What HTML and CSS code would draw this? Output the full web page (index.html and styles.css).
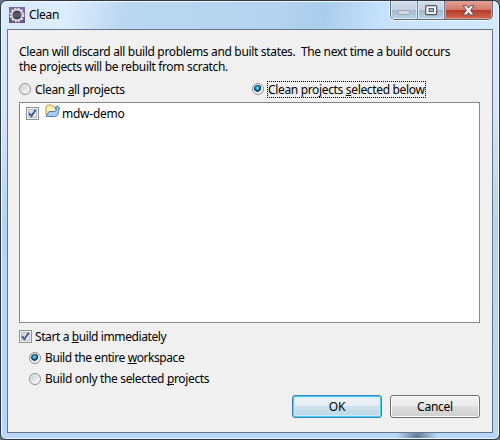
FILE: index.html
```html
<!DOCTYPE html>
<html lang="en">
<head>
<meta charset="utf-8">
<title>Clean</title>
<link rel="stylesheet" href="styles.css">
</head>
<body>
<div class="window">
  <header class="titlebar">
    <svg class="app-icon" width="16" height="16" viewBox="0 0 16 16">
      <rect width="16" height="16" fill="#65518b"/>
      <path d="M0 0h16v5L0 10z" fill="#7c6a9c"/>
      <circle cx="8" cy="8" r="6.5" fill="none" stroke="#e4e0e4" stroke-width="1.8" stroke-dasharray="2 1.4"/>
      <circle cx="8" cy="8" r="5.3" fill="#443f59" stroke="#eeeae8" stroke-width="1.4"/>
      <path d="M3.8 7h8.4M4 9h8" stroke="#777083"/>
    </svg>
    <h1 class="title">Clean</h1>
    <div class="controls">
      <span class="control min"><svg width="13" height="6" viewBox="0 0 13 6"><rect x=".5" y=".5" width="11" height="4" rx=".5" fill="#d2dae2" stroke="#9caab9"/></svg></span>
      <span class="control max"><svg width="13" height="11" viewBox="0 0 13 11"><rect x=".7" y=".7" width="11" height="9" rx="1" fill="#f8f8f8" stroke="#535666" stroke-width="1.2"/><rect x="4" y="3.6" width="4.5" height="3" fill="#a6bed4" stroke="#535666"/></svg></span>
      <span class="control close"><svg width="13" height="11" viewBox="0 0 13 11"><path d="M1 .7h3.5l2 2.4 2-2.4H12L8.6 5.3 12 10H8.4l-1.9-2.4L4.6 10H1l3.4-4.7z" fill="#f7f7f7" stroke="#56535f" stroke-linejoin="round"/></svg></span>
    </div>
  </header>
  <main class="client">
    <p class="message">Clean will discard all build problems and built states.&nbsp; The next time a build occurs<br>the projects will be rebuilt from scratch.</p>
    <div class="scope">
      <label class="option"><i class="radio"></i><span class="label">Clean <u>a</u>ll projects</span></label>
      <label class="option"><i class="radio checked"></i><span class="label focused">Clean projects <u>s</u>elected below</span></label>
    </div>
    <div class="projects">
      <div class="project">
        <i class="check"><svg width="9" height="9" viewBox="0 0 9 9"><path d="M1 4.2l2.4 3L7.7.8" fill="none" stroke="#405591" stroke-width="1.9"/></svg></i>
        <svg class="folder" width="16" height="14" viewBox="0 0 16 14">
          <path d="M1 11V3l1.5-2h4L8 3h3v7z" fill="#fff1b5" stroke="#bd9238"/>
          <path d="M1 12.5l3-5h5c2 0 2.500-1 2.500-3h-1.500l2.500-3 2.500 3h-1.200c0 4-1 8-3.300 8z" fill="#a9ccf2" stroke="#3976ba" stroke-width=".9"/>
        </svg>
        <span class="label name">mdw-demo</span>
      </div>
    </div>
    <div class="build">
      <label class="option"><i class="check"><svg width="9" height="9" viewBox="0 0 9 9"><path d="M1 4.2l2.4 3L7.7.8" fill="none" stroke="#405591" stroke-width="1.9"/></svg></i><span class="label immediate">Start a <u>b</u>uild immediately</span></label>
      <label class="option nested"><i class="radio checked"></i><span class="label entire">Build the entire <u>w</u>orkspace</span></label>
      <label class="option nested"><i class="radio"></i><span class="label only">Build only the selected <u>p</u>rojects</span></label>
    </div>
    <footer class="actions">
      <button class="button default">OK</button>
      <button class="button">Cancel</button>
    </footer>
  </main>
</div>
</body>
</html>
```
FILE: styles.css
```css
* { box-sizing: border-box; }
body {
  margin: 0;
  background: #657181;
  font: 12px/15px "Noto Sans", "Open Sans", sans-serif;
  color: #000;
}
.window {
  width: 500px;
  height: 440px;
  display: flex;
  flex-direction: column;
  padding: 0 6px 6px;
  border: 1px solid #303846;
  border-radius: 7px 7px 6px 6px;
  box-shadow: inset 0 0 0 1px #f0f9ff;
  background:
    radial-gradient(ellipse at 416px 436px, #64788f 0, transparent 20px),
    linear-gradient(#d5eaff, #d1e6fb 25%, #b4d5f5 50%, #b7d8fa);
}
.titlebar {
  flex: 0 0 28px;
  display: flex;
  align-items: flex-start;
  margin: 0 -5px;
  padding: 0 5px;
  border-top: 1px solid #f0f9ff;
  border-radius: 6px 6px 0 0;
  background: linear-gradient(100deg, #d8eafb 0, #dcedfd 13%, #bad7f1 25%, #b4d3ee 55%, #aacdec 65%, #c6e1fc 76%, #d3eaff);
}
.app-icon { margin: 5px 0 0 2px; }
.title {
  margin: 5px 0 0 4px;
  font-size: 12px;
  font-weight: 400;
  line-height: 16px;
  letter-spacing: -.3px;
}
.controls {
  display: flex;
  height: 19px;
  margin: -1px 0 0 auto;
  border: 1px solid #59697a;
  border-top: 0;
  border-radius: 0 0 5px 5px;
  box-shadow: 0 1px #f3faff, 1px 0 #f3faff, -1px 0 #f3faff;
  overflow: hidden;
}
.control {
  width: 27px;
  display: flex;
  align-items: center;
  justify-content: center;
  border-right: 1px solid #6f7e90;
  box-shadow: inset 0 0 0 1px #dceaf6;
  background: linear-gradient(#d0dce8 0, #c5d2df 48%, #a3b7ca 50%, #bad1e7);
}
.min svg { margin-top: 5px; }
.close {
  width: 47px;
  border: 0;
  box-shadow: inset 0 0 0 1px #df9d91;
  background: linear-gradient(#e4a294 0, #d17a6c 48%, #b63725 50%, #d06a51);
}
.client {
  flex: 1;
  display: flex;
  flex-direction: column;
  padding: 14px 12px 14px 11px;
  border: 1px solid #66758a;
  background: #f0f0f0;
}
.message { margin: 0 -10px 7px 0; white-space: nowrap; letter-spacing: -.333px; }
.scope { display: grid; grid-template-columns: 233px 1fr; height: 21px; }
.option { display: flex; align-items: center; gap: 3px; height: 21px; }
.scope .option { height: 16px; }
.label { white-space: nowrap; letter-spacing: -.34px; }
.only { letter-spacing: -.35px; }
.entire { letter-spacing: -.42px; }
.immediate { letter-spacing: -.4px; }
u { text-underline-offset: 1px; text-decoration-thickness: 1px; text-decoration-skip-ink: none; }
.focused { outline: 1px dotted #000; }
.radio {
  flex: none;
  width: 12px;
  height: 12px;
  margin-right: 1px;
  border: 1px solid #8e8f8f;
  border-radius: 50%;
  box-shadow: inset 0 0 0 1px #f4f4f4;
  background: linear-gradient(135deg, #bfc4ca, #f4f4f4 75%);
}
.radio.checked { background: radial-gradient(circle at 45% 40%, #9de5fa 0, #269fcd 1.5px, #14385b 3px, #203f5b 3.5px, #e8eaec 4px); }
.check {
  flex: none;
  display: grid;
  place-items: center;
  width: 13px;
  height: 13px;
  border: 1px solid #8e8f8f;
  box-shadow: inset 0 0 0 1px #f4f4f4, inset 0 0 0 2px #b9c0c9;
  background: linear-gradient(135deg, #cbd0d6, #f6f6f6);
}
.projects {
  width: 461px;
  height: 221px;
  border: 1px solid #828790;
  background: #fff;
}
.project { display: flex; align-items: center; height: 20px; padding-left: 6px; }
.folder { margin: -4px 1px 0 6px; }
.name { letter-spacing: -.25px; }
.build { margin-top: 3px; }
.nested { padding-left: 10px; }
.actions { display: flex; justify-content: flex-end; gap: 8px; margin-top: auto; }
.button {
  width: 90px;
  height: 23px;
  padding: 0;
  border: 1px solid #707070;
  border-radius: 3px;
  box-shadow: inset 0 0 0 1px #fafafa;
  background: linear-gradient(#f2f2f2, #ebebeb 48%, #dddddd 50%, #cfcfcf);
  font: 12px/15px "Noto Sans", "Open Sans", sans-serif;
  letter-spacing: -.25px;
  color: #000;
}
.default {
  border-color: #3c7fb1;
  box-shadow: inset 0 0 0 1px #48d0f6, inset 0 0 0 2px #c9eef9;
  background: linear-gradient(#edf3f6, #e4eef3 48%, #cee1eb 50%, #bcd8e6);
}
```
